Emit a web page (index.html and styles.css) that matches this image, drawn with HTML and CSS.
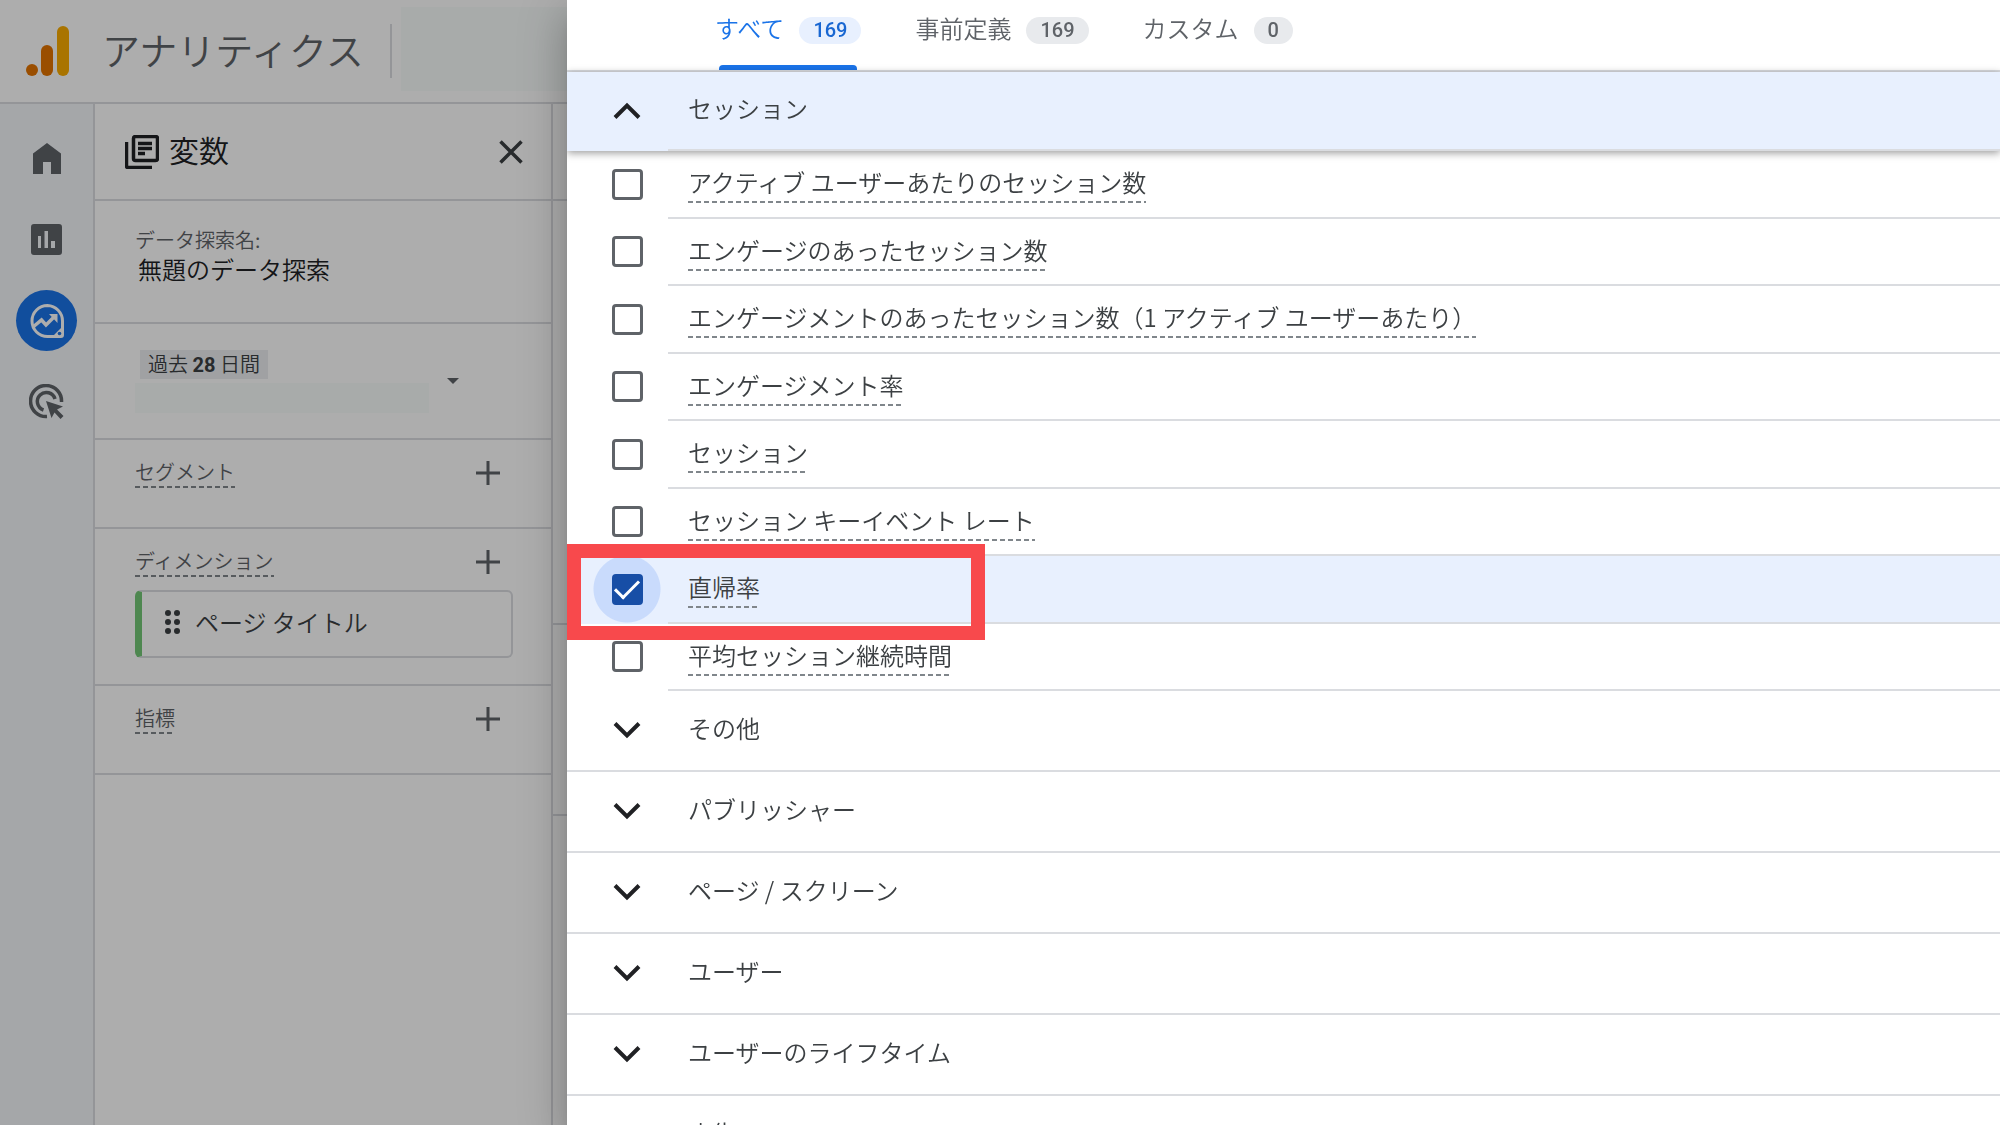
FILE: index.html
```html
<!DOCTYPE html>
<html lang="ja">
<head>
<meta charset="utf-8">
<meta name="viewport" content="width=device-width, initial-scale=1">
<title>アナリティクス</title>
<link rel="stylesheet" href="styles.css">
</head>
<body>
<div class="app">
  <header class="topbar">
    <svg class="logo" viewBox="0 0 44 50" aria-hidden="true">
      <circle cx="6" cy="44" r="6" fill="#e37400"/>
      <rect x="15" y="19" width="12" height="31" rx="6" fill="#e37400"/>
      <rect x="31" y="0" width="12" height="50" rx="6" fill="#f9ab00"/>
    </svg>
    <h1 class="product">アナリティクス</h1>
    <span class="masked account"></span>
  </header>

  <div class="workspace">
    <nav class="rail" aria-label="メイン">
      <a class="rail-item" href="#home" aria-label="ホーム">
        <svg width="28" height="32" viewBox="0 0 28 32"><path d="M14 0 28 10.500V31H18V19H10V31H0V10.500z" fill="currentColor"/></svg>
      </a>
      <a class="rail-item" href="#reports" aria-label="レポート">
        <svg width="31" height="31" viewBox="0 0 31 31"><path fill-rule="evenodd" fill="currentColor" d="M3 0H28a3 3 0 0 1 3 3V28a3 3 0 0 1-3 3H3a3 3 0 0 1-3-3V3a3 3 0 0 1 3-3zM7 12V24H10V12zM13.500 7V24H17V7zM20 17V24H24V17z"/></svg>
      </a>
      <a class="rail-item active" href="#explore" aria-label="探索" aria-current="page">
        <svg width="36" height="36" viewBox="0 0 36 36" fill="none"><path d="M18.500 2.500a15.500 15.500 0 1 0 0 31H32a1.500 1.500 0 0 0 1.500-1.500V18A15.500 15.500 0 0 0 18.500 2.500z" stroke="currentColor" stroke-width="3"/><path d="M4 24 12.500 17 17 22 26 13" stroke="currentColor" stroke-width="3.500"/><path d="M20 11H28.500V20z" fill="currentColor"/><path d="M24 33 33 24V34H24z" fill="currentColor"/><circle cx="30.500" cy="30.500" r="1.800" fill="#1a73e8"/></svg>
      </a>
      <a class="rail-item" href="#ads" aria-label="広告">
        <svg width="35" height="35" viewBox="0 0 35 35" fill="none"><path d="M18 32.500A15.500 15.500 0 1 1 32.500 18" stroke="currentColor" stroke-width="3.500"/><path d="M14.500 26A9 9 0 1 1 26 15" stroke="currentColor" stroke-width="3.500"/><path d="M17 17 34 22.500 28 25.500 34.500 32 31.500 35 25.500 28.500 22.500 34z" fill="currentColor"/></svg>
      </a>
    </nav>

    <section class="variables" aria-label="変数">
      <div class="block title-block">
        <svg width="34" height="34" viewBox="0 0 34 34" fill="none" stroke="#202124" aria-hidden="true"><rect x="8.500" y="1.500" width="24" height="24" rx="2" stroke-width="3.500"/><path d="M1.500 7V31a1.500 1.500 0 0 0 1.500 1.500H27M13 8.500H27M13 13.500H27M13 18.500H20" stroke-width="3.500"/></svg>
        <h2 class="title">変数</h2>
        <button class="icon-button" type="button" aria-label="閉じる"><svg width="24" height="24" viewBox="0 0 24 24"><path d="M1.500 1.500 22.500 22.500M22.500 1.500 1.500 22.500" stroke="#3c4043" stroke-width="3.500"/></svg></button>
      </div>
      <div class="block name-block">
        <label class="caption" for="name">データ探索名:</label>
        <input class="name" id="name" type="text" value="無題のデータ探索">
      </div>
      <div class="block date-block">
        <div class="date">
          <span class="preset">過去 <b>28</b> 日間</span>
          <span class="masked range"></span>
        </div>
        <button class="caret" type="button" aria-label="期間を選択"></button>
      </div>
      <div class="block">
        <div class="block-head"><span class="caption hint">セグメント</span><button class="icon-button" type="button" aria-label="セグメントを追加"><svg width="24" height="24" viewBox="0 0 24 24"><path d="M12 0V24M0 12H24" stroke="currentColor" stroke-width="3"/></svg></button></div>
      </div>
      <div class="block dimensions">
        <div class="block-head"><span class="caption hint">ディメンション</span><button class="icon-button" type="button" aria-label="ディメンションを追加"><svg width="24" height="24" viewBox="0 0 24 24"><path d="M12 0V24M0 12H24" stroke="currentColor" stroke-width="3"/></svg></button></div>
        <div class="chip">
          <svg width="16" height="24" viewBox="0 0 16 24" fill="currentColor" aria-hidden="true"><circle cx="3" cy="3" r="3"/><circle cx="12" cy="3" r="3"/><circle cx="3" cy="12" r="3"/><circle cx="12" cy="12" r="3"/><circle cx="3" cy="21" r="3"/><circle cx="12" cy="21" r="3"/></svg>
          ページ タイトル
        </div>
      </div>
      <div class="block">
        <div class="block-head"><span class="caption hint">指標</span><button class="icon-button" type="button" aria-label="指標を追加"><svg width="24" height="24" viewBox="0 0 24 24"><path d="M12 0V24M0 12H24" stroke="currentColor" stroke-width="3"/></svg></button></div>
      </div>
    </section>

    <div class="settings">
      <div class="settings-head"></div>
      <div class="settings-technique"></div>
      <div class="settings-visual"></div>
    </div>
  </div>
</div>

<div class="scrim"></div>

<main class="drawer">
  <div class="tabs" role="tablist">
    <button class="tab selected" type="button" role="tab" aria-selected="true">すべて<span class="badge">169</span></button>
    <button class="tab" type="button" role="tab" aria-selected="false">事前定義<span class="badge">169</span></button>
    <button class="tab" type="button" role="tab" aria-selected="false">カスタム<span class="badge">0</span></button>
  </div>

  <button class="group open" type="button" aria-expanded="true">
    <span class="lead"><svg width="28" height="18" viewBox="0 0 28 18"><path d="M2 15.500 14 3.500 26 15.500" fill="none" stroke="#202124" stroke-width="4"/></svg></span>
    <span class="group-name">セッション</span>
  </button>

  <ul class="metrics">
    <li class="metric"><span class="lead"><input type="checkbox" id="m1"></span><span class="metric-body"><label class="metric-name hint" for="m1">アクティブ ユーザーあたりのセッション数</label></span></li>
    <li class="metric"><span class="lead"><input type="checkbox" id="m2"></span><span class="metric-body"><label class="metric-name hint" for="m2">エンゲージのあったセッション数</label></span></li>
    <li class="metric"><span class="lead"><input type="checkbox" id="m3"></span><span class="metric-body"><label class="metric-name hint" for="m3">エンゲージメントのあったセッション数（1 アクティブ ユーザーあたり）</label></span></li>
    <li class="metric"><span class="lead"><input type="checkbox" id="m4"></span><span class="metric-body"><label class="metric-name hint" for="m4">エンゲージメント率</label></span></li>
    <li class="metric"><span class="lead"><input type="checkbox" id="m5"></span><span class="metric-body"><label class="metric-name hint" for="m5">セッション</label></span></li>
    <li class="metric"><span class="lead"><input type="checkbox" id="m6"></span><span class="metric-body"><label class="metric-name hint" for="m6">セッション キーイベント レート</label></span></li>
    <li class="metric checked"><span class="lead"><input type="checkbox" id="m7" checked></span><span class="metric-body"><label class="metric-name hint" for="m7">直帰率</label></span><span class="callout"></span></li>
    <li class="metric"><span class="lead"><input type="checkbox" id="m8"></span><span class="metric-body"><label class="metric-name hint" for="m8">平均セッション継続時間</label></span></li>
  </ul>

  <button class="group" type="button" aria-expanded="false"><span class="lead"><svg width="28" height="18" viewBox="0 0 28 18"><path d="M2 2.500 14 14.500 26 2.500" fill="none" stroke="#202124" stroke-width="4"/></svg></span><span class="group-name">その他</span></button>
  <button class="group" type="button" aria-expanded="false"><span class="lead"><svg width="28" height="18" viewBox="0 0 28 18"><path d="M2 2.500 14 14.500 26 2.500" fill="none" stroke="#202124" stroke-width="4"/></svg></span><span class="group-name">パブリッシャー</span></button>
  <button class="group" type="button" aria-expanded="false"><span class="lead"><svg width="28" height="18" viewBox="0 0 28 18"><path d="M2 2.500 14 14.500 26 2.500" fill="none" stroke="#202124" stroke-width="4"/></svg></span><span class="group-name">ページ / スクリーン</span></button>
  <button class="group" type="button" aria-expanded="false"><span class="lead"><svg width="28" height="18" viewBox="0 0 28 18"><path d="M2 2.500 14 14.500 26 2.500" fill="none" stroke="#202124" stroke-width="4"/></svg></span><span class="group-name">ユーザー</span></button>
  <button class="group" type="button" aria-expanded="false"><span class="lead"><svg width="28" height="18" viewBox="0 0 28 18"><path d="M2 2.500 14 14.500 26 2.500" fill="none" stroke="#202124" stroke-width="4"/></svg></span><span class="group-name">ユーザーのライフタイム</span></button>
  <button class="group" type="button" aria-expanded="false"><span class="lead"><svg width="28" height="18" viewBox="0 0 28 18"><path d="M2 2.500 14 14.500 26 2.500" fill="none" stroke="#202124" stroke-width="4"/></svg></span><span class="group-name">広告</span></button>
</main>
</body>
</html>
```

FILE: styles.css
```css
* {
  box-sizing: border-box;
}

body {
  margin: 0;
  height: 100vh;
  overflow: hidden;
  background: #fff;
  color: #3c4043;
  font-family: "Noto Sans CJK JP", sans-serif;
  font-size: 24px;
  font-weight: 350;
  line-height: 36px;
}

button,
input {
  margin: 0;
  padding: 0;
  border: 0;
  background: none;
  color: inherit;
  font: inherit;
}

svg {
  display: block;
  flex: none;
}

/* Application behind the drawer */

.app {
  display: flex;
  flex-direction: column;
  height: 100vh;
}

.topbar {
  display: flex;
  align-items: center;
  flex: none;
  height: 104px;
  padding-left: 26px;
  border-bottom: 2px solid #dadce0;
}

.logo {
  width: 44px;
  height: 50px;
}

.product {
  margin: 0 0 0 32px;
  padding: 0 26px 4px 0;
  border-right: 2px solid #dadce0;
  color: #5f6368;
  font-size: 38px;
  font-weight: 350;
  line-height: 50px;
}

.masked {
  position: relative;
  z-index: 2;
  background: #a8abaa;
}

.account {
  flex: 1;
  align-self: flex-start;
  height: 84px;
  margin: 7px 0 0 9px;
}

.workspace {
  display: flex;
  flex: 1;
}

.rail {
  display: flex;
  flex-direction: column;
  align-items: center;
  gap: 20px;
  flex: none;
  width: 95px;
  padding-top: 24px;
  border-right: 2px solid #dadce0;
  background: #f3f6fa;
}

.rail-item {
  display: grid;
  place-items: center;
  width: 61px;
  height: 61px;
  border-radius: 50%;
  color: #5f6368;
}

.rail-item.active {
  background: #1a73e8;
  color: #fff;
}

.variables {
  flex: none;
  width: 458px;
  border-right: 2px solid #dadce0;
}

.block {
  min-height: 89px;
  padding: 17px 38px 0 40px;
  border-bottom: 2px solid #dadce0;
}

.title-block {
  display: flex;
  align-items: center;
  gap: 10px;
  min-height: 97px;
  padding: 0 28px 0 30px;
}

.title {
  flex: 1;
  margin: 0;
  padding-bottom: 6px;
  color: #202124;
  font-size: 30px;
  font-weight: 350;
}

.icon-button {
  display: grid;
  place-items: center;
}

.name-block {
  display: flex;
  flex-direction: column;
  min-height: 123px;
  padding-top: 24px;
}

.caption {
  color: #5f6368;
  font-size: 20px;
  line-height: 30px;
}

.name {
  width: 100%;
  height: 28px;
  padding-left: 3px;
  color: #202124;
}

.date-block {
  display: flex;
  align-items: center;
  gap: 18px;
  min-height: 116px;
  padding-top: 0;
}

.date {
  display: flex;
  flex-direction: column;
  gap: 4px;
  width: 294px;
}

.preset {
  align-self: flex-start;
  margin-left: 5px;
  padding: 0 8px;
  background: #eceef1;
  font-size: 20px;
  line-height: 27px;
}

.preset b {
  font-family: Roboto, sans-serif;
  font-weight: 700;
}

.range {
  height: 30px;
}

.caret {
  border: solid transparent;
  border-width: 6px 6px 0;
  border-top-color: #5f6368;
}

.block-head {
  display: flex;
  align-items: center;
  justify-content: space-between;
  padding-right: 13px;
  color: #5f6368;
}

.hint {
  background: repeating-linear-gradient(90deg, #80868b 0 5px, transparent 5px 8px) bottom left / 100% 2px no-repeat;
}

.block-head .hint {
  padding-bottom: 1px;
}

.dimensions {
  min-height: 157px;
}

.chip {
  display: flex;
  align-items: center;
  gap: 14px;
  height: 68px;
  margin-top: 13px;
  padding: 0 0 4px 23px;
  border: 2px solid #dadce0;
  border-left: 7px solid #74c877;
  border-radius: 6px;
}

.settings {
  flex: 1;
}

.settings-head,
.settings-technique,
.settings-visual {
  border-bottom: 2px solid #dadce0;
}

.settings-head {
  height: 97px;
}

.settings-technique {
  height: 424px;
}

.settings-visual {
  height: 191px;
}

.scrim {
  position: fixed;
  inset: 0;
  z-index: 1;
  background: rgba(0, 0, 0, 0.32);
}

/* Metric picker */

.drawer {
  position: fixed;
  inset: 0 0 0 567px;
  z-index: 3;
  overflow: hidden;
  background: #fff;
  box-shadow: 0 12px 15px -8px rgba(0, 0, 0, 0.2), 0 24px 36px 3px rgba(0, 0, 0, 0.14), 0 9px 45px 8px rgba(0, 0, 0, 0.12);
}

.tabs {
  display: flex;
  gap: 54px;
  height: 72px;
  padding-left: 148px;
  border-bottom: 2px solid #dadce0;
}

.tab {
  position: relative;
  display: flex;
  align-items: center;
  gap: 15px;
  padding-bottom: 14px;
  color: #5f6368;
}

.tab.selected {
  color: #1a73e8;
}

.tab.selected::after {
  content: "";
  position: absolute;
  right: 4px;
  bottom: 0;
  left: 4px;
  height: 5px;
  border-radius: 4px 4px 0 0;
  background: #1a73e8;
}

.badge {
  margin-top: 4px;
  padding: 0 14px;
  border-radius: 14px;
  background: #e8eaed;
  font-family: Roboto, sans-serif;
  font-size: 20px;
  font-weight: 500;
  line-height: 27px;
}

.selected .badge {
  background: #e8f0fe;
  color: #1967d2;
}

.group,
.metric {
  position: relative;
  display: grid;
  grid-template-columns: 101px 1fr;
  width: 100%;
  text-align: left;
}

.group {
  height: 81px;
  border-bottom: 2px solid #dadce0;
}

.lead {
  display: grid;
  place-items: center;
  padding: 0 0 2px 19px;
}

.group-name,
.metric-body {
  display: flex;
  align-items: center;
  padding-left: 20px;
}

.group-name {
  padding-bottom: 6px;
}

.group.open {
  z-index: 1;
  height: 79px;
  border-bottom: 0;
  background: #e8f0fe;
  box-shadow: 0 2px 8px rgba(0, 0, 0, 0.4);
}

.open .group-name,
.metric-body {
  border-bottom: 2px solid #dadce0;
}

.metrics {
  margin: 0;
  padding: 0;
  list-style: none;
}

.metric {
  height: 67px;
}

.metric:nth-child(odd) {
  height: 68px;
}

.metric-name {
  padding-bottom: 4px;
  line-height: 34px;
}

.metric input {
  display: grid;
  place-items: center;
  width: 31px;
  height: 31px;
  border: 3px solid #5f6368;
  border-radius: 4px;
  appearance: none;
}

.metric.checked {
  background: #e8f0fe;
}

.checked .lead {
  background: radial-gradient(circle at 60px 33px, #c9dbfc 33px, transparent 34px);
}

.metric input:checked {
  border-color: #174ea6;
  background: #174ea6;
}

.metric input:checked::before {
  content: "";
  width: 21px;
  height: 10px;
  margin-bottom: 6px;
  border: solid #fff;
  border-width: 0 0 3px 3px;
  transform: rotate(-45deg);
}

.callout {
  position: absolute;
  top: -12px;
  left: 0;
  z-index: 1;
  width: 418px;
  height: 96px;
  border: 14px solid #f8494c;
  pointer-events: none;
}
```
